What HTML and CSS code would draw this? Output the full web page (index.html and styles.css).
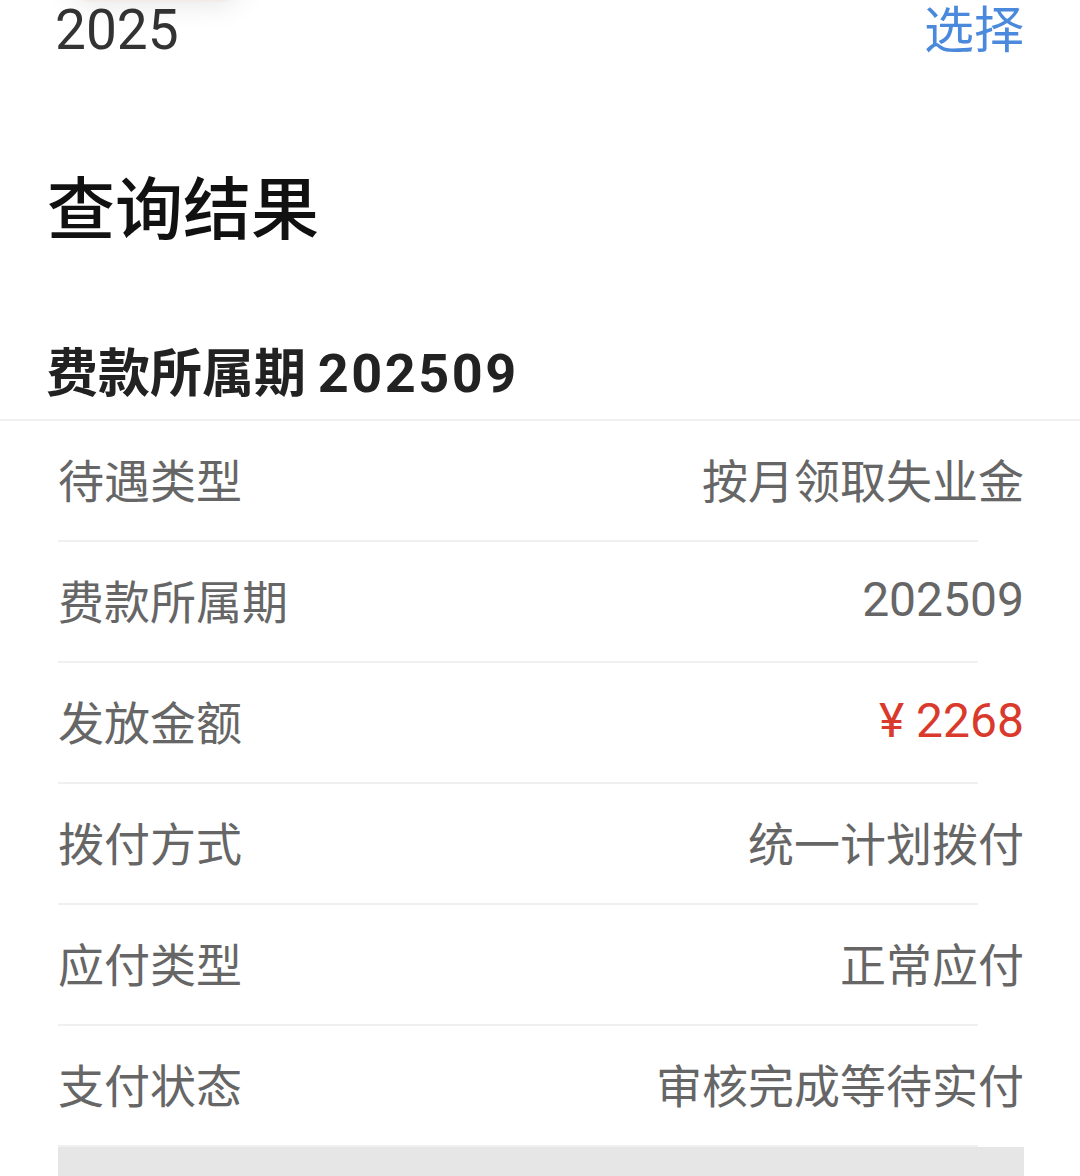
FILE: index.html
```html
<!DOCTYPE html>
<html lang="zh-CN">
<head>
    <meta charset="UTF-8">
    <meta name="viewport" content="width=device-width, initial-scale=1.0">
    <title>查询结果</title>
    <link rel="stylesheet" href="styles.css">
</head>
<body>
    <div class="float-tip"></div>

    <div class="year-row">
        <span class="year num">2025</span>
        <a class="pick">选择</a>
    </div>

    <h1 class="title">查询结果</h1>

    <h2 class="period">费款所属期 <span class="num">202509</span></h2>

    <div class="list">
        <div class="row">
            <span class="label">待遇类型</span>
            <span class="value">按月领取失业金</span>
        </div>
        <hr class="sep">
        <div class="row">
            <span class="label">费款所属期</span>
            <span class="value num">202509</span>
        </div>
        <hr class="sep">
        <div class="row">
            <span class="label">发放金额</span>
            <span class="value money num">¥ 2268</span>
        </div>
        <hr class="sep">
        <div class="row">
            <span class="label">拨付方式</span>
            <span class="value">统一计划拨付</span>
        </div>
        <hr class="sep">
        <div class="row">
            <span class="label">应付类型</span>
            <span class="value">正常应付</span>
        </div>
        <hr class="sep">
        <div class="row">
            <span class="label">支付状态</span>
            <span class="value">审核完成等待实付</span>
        </div>
        <hr class="sep">
    </div>

    <div class="bottom-bar"></div>
</body>
</html>
```

FILE: styles.css
```css
body {
    margin: 0;
    background: #fff;
    font-family: "Noto Sans CJK SC", "Noto Sans", sans-serif;
    overflow: hidden;
}
.num {
    font-family: Roboto, "Noto Sans CJK SC", sans-serif;
}
.float-tip {
    position: absolute;
    left: 72px;
    top: -40px;
    width: 168px;
    height: 42px;
    border-radius: 20px;
    background: #f2ebe8;
    box-shadow: 0 0 30px rgba(0, 0, 0, 0.12);
}
.year-row {
    display: flex;
    justify-content: space-between;
    align-items: center;
    height: 60px;
    padding: 0 56px 0 55px;
}
.year {
    font-size: 55px;
    line-height: 60px;
    color: #333;
}
.pick {
    align-self: flex-start;
    font-size: 50px;
    line-height: 52px;
    color: #4b89dc;
}
.title {
    margin: 111px 0 0;
    padding-left: 47px;
    font-size: 68px;
    line-height: 1;
    font-weight: 500;
    color: #111;
}
.period {
    margin: 105px 0 0;
    padding: 0 0 18px 46px;
    font-size: 52px;
    line-height: 1;
    font-weight: 700;
    color: #222;
    border-bottom: 2px solid #f0f0f0;
}
.period .num {
    font-size: 54px;
    letter-spacing: 2.5px;
}
.row {
    display: flex;
    justify-content: space-between;
    align-items: center;
    box-sizing: border-box;
    height: 119px;
    padding: 0 56px 5px 58px;
    font-size: 46px;
    color: #666;
}
.value.num {
    font-size: 48px;
}
.money {
    color: #d93a2c;
}
.sep {
    margin: 0 102px 0 58px;
    height: 2px;
    border: none;
    background: #f0f0f0;
}
.bottom-bar {
    margin: 0 56px 0 58px;
    height: 40px;
    background: #e6e6e6;
}
```
